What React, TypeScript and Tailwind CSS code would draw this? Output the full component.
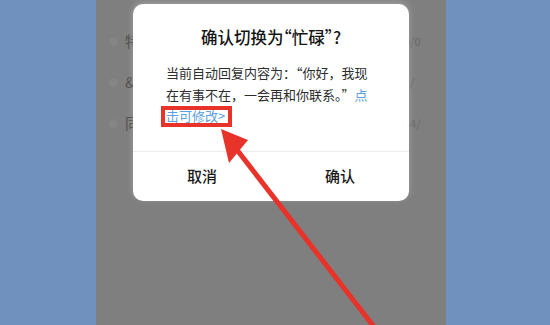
const rows = [
  { ch: "特", val: "0/0" },
  { ch: "&", val: "2/" },
  { ch: "同", val: "34/" },
];

export default function App() {
  return (
    <div
      className="relative flex h-[325px] w-[550px] overflow-hidden bg-[#7091be]"
      style={{ fontFamily: '"Noto Sans CJK SC", "Noto Sans", sans-serif' }}
    >
      {/* dimmed phone screen */}
      <div className="relative ml-[96px] flex h-full w-[350px] flex-col bg-[#7f7f7f] pt-[21px]">
        {rows.map((r) => (
          <div key={r.val} className="flex h-[41px] items-center text-[#4f4f4f]">
            <div className="ml-[13px] h-[9px] w-[9px] rounded-full bg-[#858585]" />
            <span className="ml-[7px] text-[15px]">{r.ch}</span>
            <span className="ml-auto mr-[20px] w-[22px] text-[11px] text-[#6a6a6a]">{r.val}</span>
          </div>
        ))}

        {/* dialog */}
        <div className="absolute left-[37px] top-[4px] flex h-[197px] w-[276px] flex-col rounded-[10px] bg-white shadow-[0_-2px_6px_rgba(255,255,255,0.25)]">
          <div className="pt-[21px] text-center text-[16.5px] font-medium leading-[24px] text-[#151515] [font-feature-settings:'halt']">
            确认切换为“忙碌”?
          </div>
          <div className="mx-[33px] mt-[13px] text-[13px] leading-[21.5px] text-[#2e2e2e]">
            <div className="whitespace-nowrap">当前自动回复内容为：“你好，我现</div>
            <div className="whitespace-nowrap">
              在有事不在，一会再和你联系。”<span className="text-[#5aa0e0]">点</span>
            </div>
            <div className="whitespace-nowrap text-[#5aa0e0]">击可修改&gt;</div>
          </div>
          <div className="mt-auto flex h-[50px] border-t border-[#ececec]">
            <button type="button" className="flex-1 text-[15px] font-medium text-[#1a1a1a]">
              取消
            </button>
            <button type="button" className="flex-1 text-[15px] font-medium text-[#1a1a1a]">
              确认
            </button>
          </div>
        </div>
      </div>

      {/* annotation: red box and arrow */}
      <div className="absolute left-[161px] top-[106px] h-[21px] w-[71px] border-4 border-[#e8332b]" />
      <svg className="pointer-events-none absolute inset-0" width="550" height="325" viewBox="0 0 550 325">
        <line x1="234" y1="146" x2="378" y2="332" stroke="#e8332b" strokeWidth="5" />
        <polygon points="221,129 248,140 229,163" fill="#e8332b" />
      </svg>
    </div>
  );
}
